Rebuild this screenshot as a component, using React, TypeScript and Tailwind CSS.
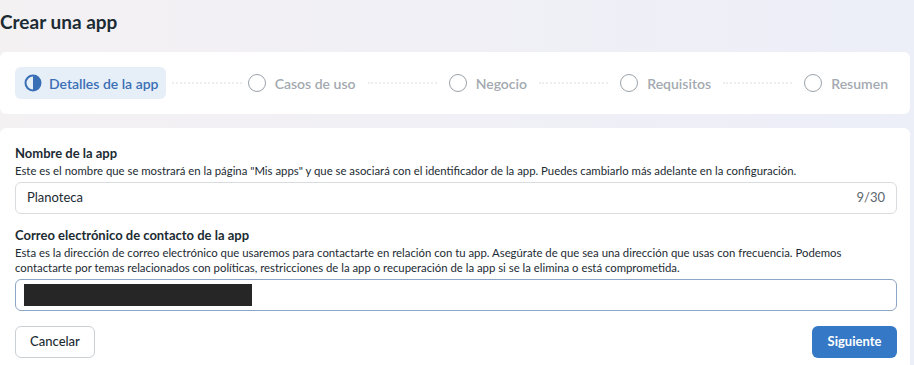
import React from 'react';

const STEPS = ['Casos de uso', 'Negocio', 'Requisitos', 'Resumen'];

function HalfCircle() {
  return (
    <svg width="18" height="18" viewBox="0 0 18 18" className="shrink-0">
      <circle cx="9" cy="9" r="7.5" fill="none" stroke="#3a6fb5" strokeWidth="2" />
      <path d="M9 1.5 A7.5 7.5 0 0 1 9 16.5 Z" fill="#3a6fb5" />
    </svg>
  );
}

function Dots({ first }: { first?: boolean }) {
  return (
    <div
      className={
        first
          ? 'mx-[6px] h-0 flex-1 border-t-2 border-dotted border-[#eceef0]'
          : 'mx-3 h-0 flex-1 border-t-2 border-dotted border-[#eceef0]'
      }
    />
  );
}

function Stepper() {
  return (
    <div className="flex h-[62px] items-center rounded-md bg-white pl-[15px] pr-[22px]">
      <div className="flex h-[32px] items-center gap-[7px] rounded-md bg-[#e6eef8] pl-[9px] pr-[8px]">
        <HalfCircle />
        <span className="text-[14px] font-semibold text-[#3a6fb5]">Detalles de la app</span>
      </div>
      {STEPS.map((s, i) => (
        <React.Fragment key={s}>
          <Dots first={i === 0} />
          <div className="flex items-center gap-[9px]">
            <span className="h-[18px] w-[18px] rounded-full border-[1.5px] border-[#9ba2a9]" />
            <span className="text-[14px] font-semibold text-[#a3a9b0]">{s}</span>
          </div>
        </React.Fragment>
      ))}
    </div>
  );
}

function Field({
  label,
  desc,
  children,
}: {
  label: string;
  desc: React.ReactNode;
  children: React.ReactNode;
}) {
  return (
    <div>
      <div className="text-[13px] font-bold leading-[18px] text-[#1c2b33]">{label}</div>
      <p className="mb-[4px] mt-[1px] text-[11.35px] leading-[15px] text-[#1c2b33]">{desc}</p>
      {children}
    </div>
  );
}

export default function App() {
  return (
    <div
      className="h-[365px] w-[914px] overflow-hidden bg-gradient-to-r from-[#f4f1f3] to-[#eceef8] pr-[4px]"
      style={{ fontFamily: 'Lato, "Noto Sans", sans-serif' }}
    >
      <h1 className="flex h-[52px] items-center pb-[8px] text-[19px] font-bold text-[#1c2b33]">
        Crear una app
      </h1>
      <div className="w-[910px]">
        <Stepper />
        <div className="mt-[14px] h-[300px] rounded-t-md bg-white px-[15px] pt-[16px]">
          <Field
            label="Nombre de la app"
            desc='Este es el nombre que se mostrará en la página "Mis apps" y que se asociará con el identificador de la app. Puedes cambiarlo más adelante en la configuración.'
          >
            <div className="flex h-[32px] w-[882px] items-center justify-between rounded-md border border-[#d9dcdf] pl-[11px] pr-[11px] text-[13px] text-[#1c2b33]">
              <span>Planoteca</span>
              <span className="text-[#5d6770]">9/30</span>
            </div>
          </Field>
          <div className="mt-[12px]">
            <Field
              label="Correo electrónico de contacto de la app"
              desc={
                <>
                  Esta es la dirección de correo electrónico que usaremos para contactarte en relación con tu app. Asegúrate de que sea una dirección que usas con frecuencia. Podemos
                  <br />
                  contactarte por temas relacionados con políticas, restricciones de la app o recuperación de la app si se la elimina o está comprometida.
                </>
              }
            >
              <div className="flex h-[32px] w-[882px] items-center rounded-md border border-[#8ea6c6] pl-[8px]">
                <div className="h-[22px] w-[228px] bg-[#262626]" />
              </div>
            </Field>
          </div>
          <div className="mt-[15px] flex w-[882px] justify-between">
            <button className="h-[32px] w-[80px] rounded-md border border-[#cbd0d4] bg-white text-[13px] font-medium text-[#1c2b33]">
              Cancelar
            </button>
            <button className="h-[32px] w-[85px] rounded-md bg-[#3578c5] text-[13px] font-bold text-white">
              Siguiente
            </button>
          </div>
        </div>
      </div>
    </div>
  );
}
